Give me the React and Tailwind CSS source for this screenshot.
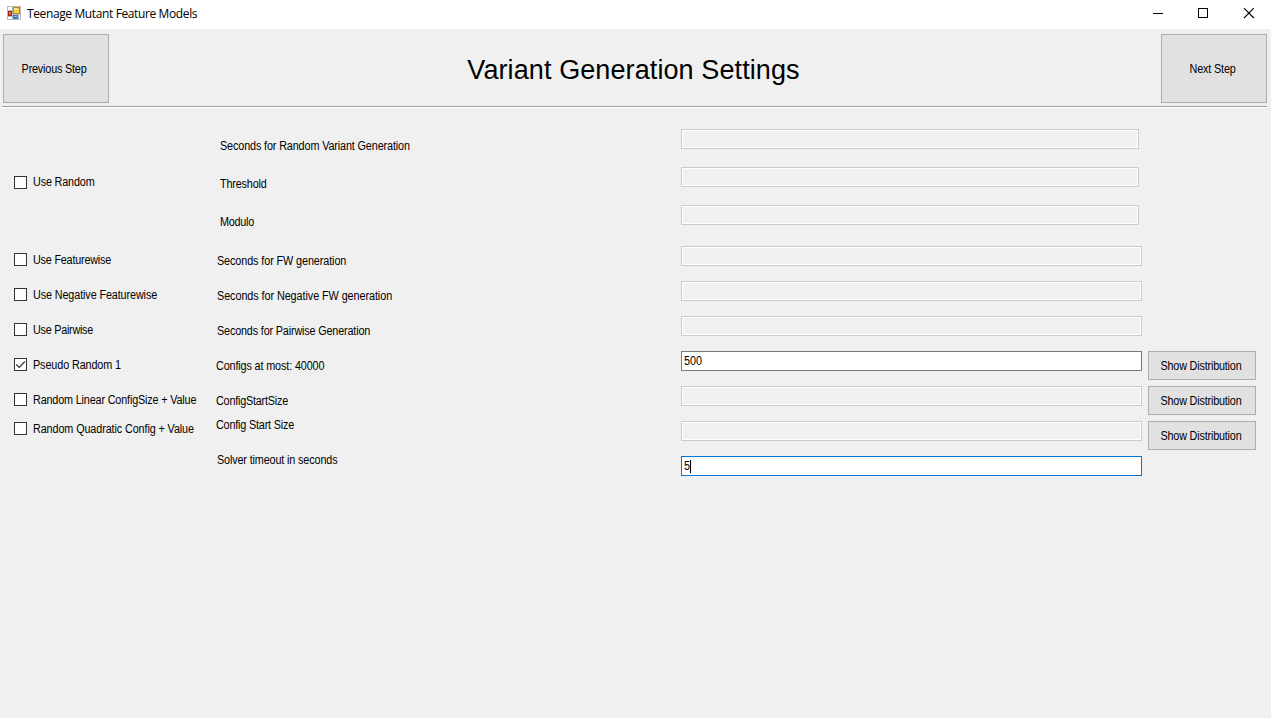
import React from 'react';

const checks = [
  { text: 'Use Random', gap: 'mt-[68px]', track: 'tracking-[-0.17px] mb-0.5' },
  { text: 'Use Featurewise', gap: 'mt-16', track: 'tracking-[-0.22px]' },
  { text: 'Use Negative Featurewise', gap: 'mt-[22px]', track: 'tracking-[-0.12px]' },
  { text: 'Use Pairwise', gap: 'mt-[22px]', track: 'tracking-[-0.28px]' },
  { text: 'Pseudo Random 1', gap: 'mt-[22px]', track: 'tracking-[-0.11px]', checked: true },
  { text: 'Random Linear ConfigSize + Value', gap: 'mt-[22px]', track: 'tracking-[-0.17px]' },
  { text: 'Random Quadratic Config + Value', gap: 'mt-4', track: 'tracking-[-0.11px]' },
];

const labels = [
  { text: 'Seconds for Random Variant Generation', gap: 'mt-[30px] pl-1', track: 'tracking-[-0.135px]' },
  { text: 'Threshold', gap: 'mt-[22px] pl-1', track: 'tracking-[-0.17px]' },
  { text: 'Modulo', gap: 'mt-[22px] pl-1', track: 'tracking-[-0.25px]' },
  { text: 'Seconds for FW generation', gap: 'mt-[23px] pl-px', track: 'tracking-[-0.1px]' },
  { text: 'Seconds for Negative FW generation', gap: 'mt-[19px] pl-px', track: 'tracking-[-0.065px]' },
  { text: 'Seconds for Pairwise Generation', gap: 'mt-[19px] pl-px', track: 'tracking-[-0.17px]' },
  { text: 'Configs at most: 40000', gap: 'mt-[19px]', track: 'tracking-[-0.14px]' },
  { text: 'ConfigStartSize', gap: 'mt-[19px]', track: 'tracking-[-0.23px]' },
  { text: 'Config Start Size', gap: 'mt-2', track: 'tracking-[-0.2px]' },
  { text: 'Solver timeout in seconds', gap: 'mt-[19px] pl-px', track: 'tracking-[-0.145px]' },
];

const fields = [
  { gap: 'mt-[21px] w-[458px]' },
  { gap: 'mt-[18px] w-[458px]' },
  { gap: 'mt-[18px] w-[458px]' },
  { gap: 'mt-[21px] w-[461px]' },
  { gap: 'mt-[15px] w-[461px]' },
  { gap: 'mt-[15px] w-[461px]' },
  { gap: 'mt-[15px] w-[461px]', value: '500' },
  { gap: 'mt-[15px] w-[461px]' },
  { gap: 'mt-[15px] w-[461px]' },
  { gap: 'mt-[15px] w-[461px]', value: '5', focused: true },
];

function AppIcon() {
  return (
    <svg className="size-3.5" viewBox="0 0 14 14" shapeRendering="crispEdges">
      <rect width="14" height="14" fill="#b9b9b9" />
      <rect x="1" y="1" width="4" height="3" fill="#fff" />
      <rect x="1" y="11" width="4" height="2" fill="#fff" />
      <rect x="12" y="9" width="1" height="4" fill="#fff" />
      <rect x="1" y="5" width="4" height="5" fill="#a81f13" />
      <rect x="2" y="6" width="2" height="3" fill="#e2695a" />
      <rect x="6" y="1" width="7" height="7" fill="#c58a12" />
      <rect x="7" y="2" width="5" height="5" fill="#f9cf45" />
      <rect x="7" y="2" width="3" height="2" fill="#fde58a" />
      <rect x="6" y="9" width="5" height="4" fill="#3d74d6" />
      <rect x="7" y="10" width="3" height="1" fill="#8cb4f5" />
    </svg>
  );
}

function Check({ item }) {
  return (
    <label className={`flex h-[13px] items-center ${item.gap}`}>
      <span className="block size-[13px] shrink-0 border border-[#333] bg-white">
        {item.checked && (
          <svg className="size-[11px]" viewBox="0 0 11 11" fill="none" stroke="#333" strokeWidth="1.2">
            <path d="M1.3 5.5 4.2 8.4 9.9 2.5" />
          </svg>
        )}
      </span>
      <span className={`ml-1.5 origin-left scale-x-90 leading-4 ${item.track}`}>{item.text}</span>
    </label>
  );
}

function Field({ item }) {
  if (item.value) {
    return (
      <div className={`flex h-5 items-center border bg-white pl-0.5 ${item.gap} ${item.focused ? 'border-[#0078d7]' : 'border-[#7a7a7a]'}`}>
        <span className="origin-left scale-x-90 leading-4">{item.value}</span>
        {item.focused && <span className="-ml-px h-[13px] w-px bg-black" />}
      </div>
    );
  }
  return (
    <div className={`h-5 border border-[#ccc] bg-white p-px ${item.gap}`}>
      <div className="h-full bg-[#f0f0f0]" />
    </div>
  );
}

function Button({ children, className }) {
  return (
    <button className={`flex items-center justify-center border border-[#adadad] bg-[#e1e1e1] ${className}`}>
      <span className="block scale-x-90">{children}</span>
    </button>
  );
}

export default function App() {
  return (
    <div className="flex h-[718px] w-[1271px] flex-col overflow-hidden bg-[#f0f0f0] font-['Liberation_Sans',Arial,sans-serif] text-[12px] whitespace-nowrap text-black">
      <div className="flex h-[29px] shrink-0 items-start bg-white pl-[7px]">
        <div className="mt-1.5"><AppIcon /></div>
        <span className="mt-[5px] ml-1.5 font-['Open_Sans','Noto_Sans',sans-serif] leading-[17px] tracking-[-0.38px]">Teenage Mutant Feature Models</span>
        <svg className="ml-auto h-[29px] w-[120px]" viewBox="0 0 120 29" fill="none" stroke="#000">
          <path d="M2 13.5h10M47.5 8.5h9v9h-9z" shapeRendering="crispEdges" />
          <path d="M93 8.2l9.8 9.8M102.800 8.200l-9.8 9.800" strokeWidth="1.1" />
        </svg>
      </div>

      <div className="ml-0.5 flex h-[77px] w-[1265px] shrink-0 items-start justify-between pt-[5px] pl-px">
        <Button className="h-[69px] w-[106px] pr-[3px] tracking-[-0.2px]">Previous Step</Button>
        <h1 className="mt-5 mr-[3px] text-[27px] leading-8 tracking-[0.1px]">Variant Generation Settings</h1>
        <Button className="h-[69px] w-[106px] pr-0.5 tracking-[-0.17px]">Next Step</Button>
      </div>
      <div className="ml-0.5 h-0.5 w-[1265px] shrink-0 border-t border-b border-t-[#a0a0a0] border-b-white" />

      <div className="flex items-start">
        <div className="flex w-[216px] flex-col pl-3.5">
          {checks.map((item) => <Check key={item.text} item={item} />)}
        </div>
        <div className="flex w-[465px] flex-col">
          {labels.map((item) => (
            <div key={item.text} className={`flex leading-4 ${item.gap}`}>
              <span className={`origin-left scale-x-90 ${item.track}`}>{item.text}</span>
            </div>
          ))}
        </div>
        <div className="flex w-[467px] flex-col items-start">
          {fields.map((item, i) => <Field key={i} item={item} />)}
        </div>
        <div className="mt-[243px] flex flex-col gap-1.5">
          {[0, 1, 2].map((i) => (
            <Button key={i} className="h-[29px] w-[108px] pr-0.5 tracking-[-0.2px]">Show Distribution</Button>
          ))}
        </div>
      </div>
    </div>
  );
}
